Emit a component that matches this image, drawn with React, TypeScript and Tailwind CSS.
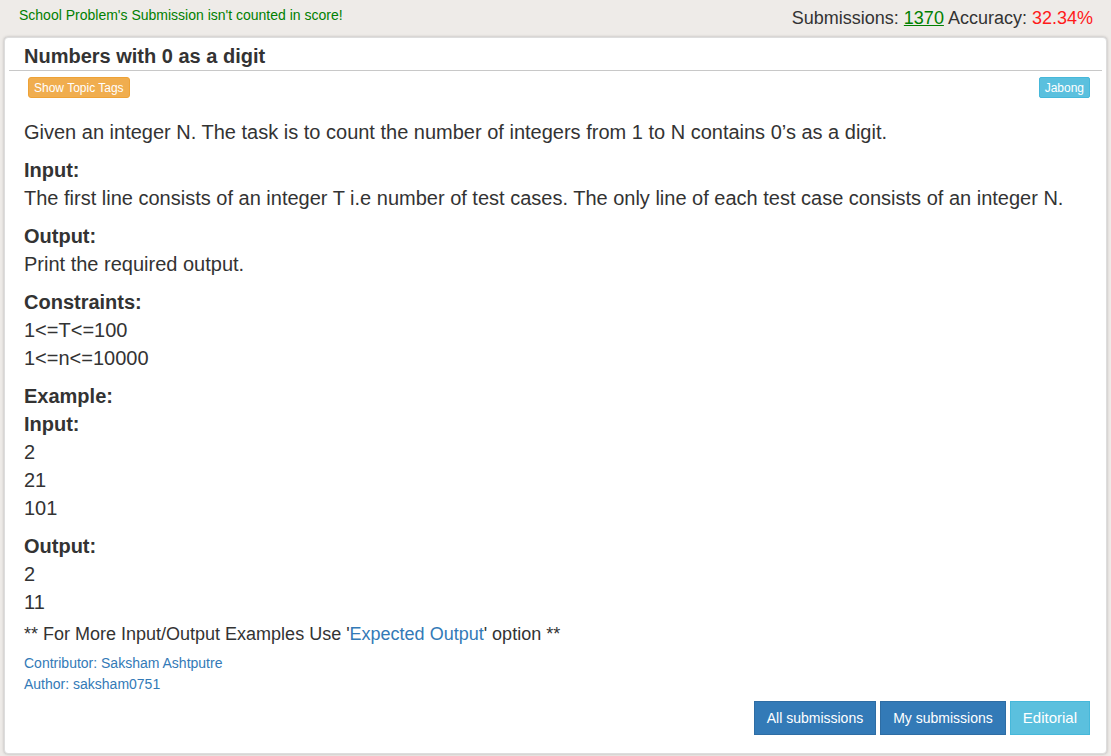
const font = { fontFamily: '"Liberation Sans", Arial, sans-serif' };

function Heading({ children }: { children: React.ReactNode }) {
  return <div className="font-bold">{children}</div>;
}

export default function App() {
  return (
    <div className="w-[1111px] h-[756px] bg-[#eeebe8] text-[#333333] overflow-hidden" style={font}>
      <div className="flex items-center justify-between h-[37px] pl-[19px] pr-[18px]">
        <span className="text-[14px] text-[#008000] -mt-[6px]">School Problem's Submission isn't counted in score!</span>
        <span className="text-[18px] -mt-[1px]">
          Submissions: <span className="text-[#008000] underline">1370</span> Accuracy:{' '}
          <span className="text-[#ff1a1a]">32.34%</span>
        </span>
      </div>
      <div className="mx-[4px] h-[717px] bg-white rounded-[4px] border border-[#dddddd] shadow-[0_0_3px_rgba(0,0,0,0.25)] px-[4px]">
        <h2 className="text-[20px] font-bold leading-[22px] pt-[7px] pl-[15px]">Numbers with 0 as a digit</h2>
        <div className="h-px bg-[#c8c8c8] mt-[3px]" />
        <div className="flex justify-between items-center mt-[6px] pl-[19px] pr-[12px]">
          <button className="h-[21px] px-[5px] text-[12px] text-white bg-[#f0ad4e] border border-[#eea236] rounded-[3px]">
            Show Topic Tags
          </button>
          <button className="h-[21px] px-[5px] text-[12px] text-white bg-[#5bc0de] border border-[#46b8da] rounded-[2px]">
            Jabong
          </button>
        </div>
        <div className="text-[20px] leading-[28px] px-[15px] mt-[20px]">
          <p>Given an integer N. The task is to count the number of integers from 1 to N contains 0’s as a digit.</p>
          <div className="mt-[10px]">
            <Heading>Input:</Heading>
            <div>The first line consists of an integer T i.e number of test cases. The only line of each test case consists of an integer N.</div>
          </div>
          <div className="mt-[10px]">
            <Heading>Output:</Heading>
            <div>Print the required output.</div>
          </div>
          <div className="mt-[10px]">
            <Heading>Constraints:</Heading>
            <div>1&lt;=T&lt;=100</div>
            <div>1&lt;=n&lt;=10000</div>
          </div>
          <div className="mt-[10px]">
            <Heading>Example:</Heading>
            <Heading>Input:</Heading>
            <div>2</div>
            <div>21</div>
            <div>101</div>
          </div>
          <div className="mt-[10px]">
            <Heading>Output:</Heading>
            <div>2</div>
            <div>11</div>
          </div>
          <p className="mt-[4px] text-[18px]">
            ** For More Input/Output Examples Use '<span className="text-[#337ab7]">Expected Output</span>' option **
          </p>
        </div>
        <div className="px-[15px] mt-[5px] text-[14px] leading-[21px] text-[#337ab7]">
          <div>Contributor: Saksham Ashtputre</div>
          <div>Author: saksham0751</div>
        </div>
        <div className="flex justify-end gap-[4px] pr-[12px] mt-[6px]">
          <button className="h-[34px] px-[12px] text-[14px] text-white bg-[#337ab7] border border-[#2e6da4]">All submissions</button>
          <button className="h-[34px] px-[12px] text-[14px] text-white bg-[#337ab7] border border-[#2e6da4]">My submissions</button>
          <button className="h-[34px] px-[12px] text-[15px] text-white bg-[#5bc0de] border border-[#46b8da]">Editorial</button>
        </div>
      </div>
    </div>
  );
}
